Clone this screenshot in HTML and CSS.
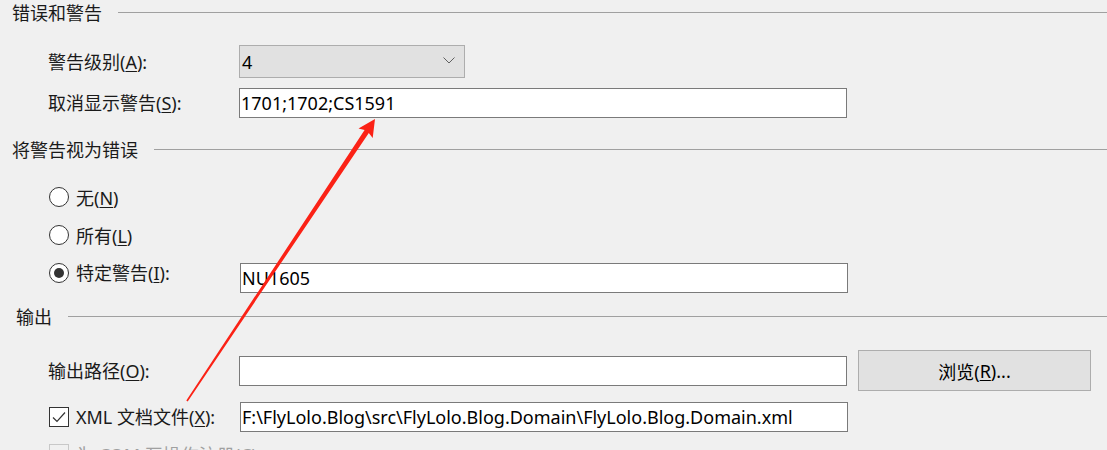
FILE: index.html
```html
<!DOCTYPE html>
<html lang="zh-CN">
<head>
<meta charset="utf-8">
<title>生成设置</title>
<link rel="stylesheet" href="styles.css">
</head>
<body>
<div class="page">
  <div class="section-head"><span class="title">错误和警告</span><span class="rule"></span></div>

  <div class="row row-a">
    <span class="lbl">警告级别(<u>A</u>):</span>
    <div class="select"><span class="val">4</span>
      <svg class="chev" width="12" height="7" viewBox="0 0 12 7"><path d="M0.5 0.5 L6 6 L11.5 0.5" fill="none" stroke="#606060" stroke-width="1"/></svg>
    </div>
  </div>

  <div class="row row-b">
    <span class="lbl">取消显示警告(<u>S</u>):</span>
    <div class="field">1701;1702;CS1591</div>
  </div>

  <div class="section-head sh2"><span class="title">将警告视为错误</span><span class="rule"></span></div>

  <div class="opt r1"><span class="radio"></span><span>无(<u>N</u>)</span></div>
  <div class="opt r2"><span class="radio"></span><span>所有(<u>L</u>)</span></div>
  <div class="row row-c">
    <div class="opt lbl"><span class="radio on"></span><span>特定警告(<u>I</u>):</span></div>
    <div class="field f-c">NU1605</div>
  </div>

  <div class="section-head sh3"><span class="title">输出</span><span class="rule"></span></div>

  <div class="row row-d">
    <span class="lbl">输出路径(<u>O</u>):</span>
    <div class="field"></div>
    <div class="btn">浏览(<u>R</u>)...</div>
  </div>

  <div class="row row-e">
    <div class="opt lbl"><span class="check on"><svg width="14" height="12" viewBox="0 0 14 12"><path d="M1 6.5 L5 10.5 L13 1.5" fill="none" stroke="#333" stroke-width="1.2"/></svg></span><span>XML 文档文件(<u>X</u>):</span></div>
    <div class="field">F:\FlyLolo.Blog\src\FlyLolo.Blog.Domain\FlyLolo.Blog.Domain.xml</div>
  </div>

  <div class="opt r-com disabled"><span class="check"></span><span>为 COM 互操作注册(<u>C</u>)</span></div>
</div>

<svg class="arrow" width="1107" height="450" viewBox="0 0 1107 450">
  <polygon fill="#fb2216" points="375,119 372.7,137.9 368.8,132.9 187.7,401.4 186.3,400.6 364.6,130.1 358.5,128.5"/>
</svg>
</body>
</html>
```

FILE: styles.css
```css
html, body {
  margin: 0;
  padding: 0;
  background: #f0f0f0;
}
body {
  width: 1107px;
  height: 450px;
  overflow: hidden;
  position: relative;
  font-family: "Noto Sans", "Noto Sans CJK SC", sans-serif;
  font-size: 18px;
  color: #1a1a1a;
}
u {
  text-decoration-thickness: 1px;
  text-underline-offset: 2px;
}
.page {
  display: flex;
  flex-direction: column;
}
.section-head {
  display: flex;
  align-items: center;
  height: 26px;
  padding-left: 12px;
  gap: 16px;
  line-height: 26px;
}
.section-head .rule {
  flex: 1;
  height: 1px;
  background: #a0a0a0;
  margin-top: -1px;
}
.sh2 { margin-top: 19px; }
.sh3 { margin-top: 11px; padding-left: 16px; }

.row {
  display: flex;
  align-items: center;
  padding-left: 48px;
}
.lbl {
  width: 191px;
  flex: none;
  line-height: 26px;
  white-space: nowrap;
}
.row-a { margin-top: 19px; height: 33px; }
.row-b { margin-top: 10px; height: 30px; }
.row-c { margin-top: 12px; align-items: flex-start; }
.row-d { margin-top: 20px; height: 41px; }
.row-e { margin-top: 11px; height: 30px; }

.select {
  box-sizing: border-box;
  width: 226px;
  height: 33px;
  background: #e1e1e1;
  border: 1px solid #adadad;
  display: flex;
  align-items: center;
  justify-content: space-between;
  padding: 0 9px 0 2px;
  color: #000;
}
.select .chev { display: block; margin-bottom: 2px; }

.field {
  box-sizing: border-box;
  width: 608px;
  height: 30px;
  background: #fff;
  border: 1px solid #7a7a7a;
  padding: 0 2px 0 1px;
  line-height: 28px;
  color: #000;
  white-space: nowrap;
  overflow: hidden;
}
.f-c { margin-top: 3px; }

.btn {
  box-sizing: border-box;
  margin-left: 11px;
  width: 233px;
  height: 41px;
  background: #e1e1e1;
  border: 1px solid #adadad;
  display: flex;
  align-items: center;
  justify-content: center;
  color: #000;
}

.opt {
  display: flex;
  align-items: center;
  height: 26px;
  gap: 7px;
  padding-left: 49px;
  white-space: nowrap;
}
.row .opt { padding-left: 1px; }
.r1 { margin-top: 21px; }
.r2 { margin-top: 12px; }
.r-com { margin-top: 9px; }

.radio {
  box-sizing: border-box;
  width: 20px;
  height: 20px;
  border: 1px solid #333;
  border-radius: 50%;
  background: #fff;
  flex: none;
  display: flex;
  align-items: center;
  justify-content: center;
}
.radio.on::after {
  content: "";
  width: 10px;
  height: 10px;
  border-radius: 50%;
  background: #333;
}
.check {
  box-sizing: border-box;
  width: 20px;
  height: 20px;
  border: 1px solid #333;
  background: #fff;
  flex: none;
  display: flex;
  align-items: center;
  justify-content: center;
}
.disabled { color: #a0a0a0; }
.disabled .check { border-color: #c8c8c8; background: #f0f0f0; }

.arrow {
  position: absolute;
  left: 0;
  top: 0;
  pointer-events: none;
}
```
